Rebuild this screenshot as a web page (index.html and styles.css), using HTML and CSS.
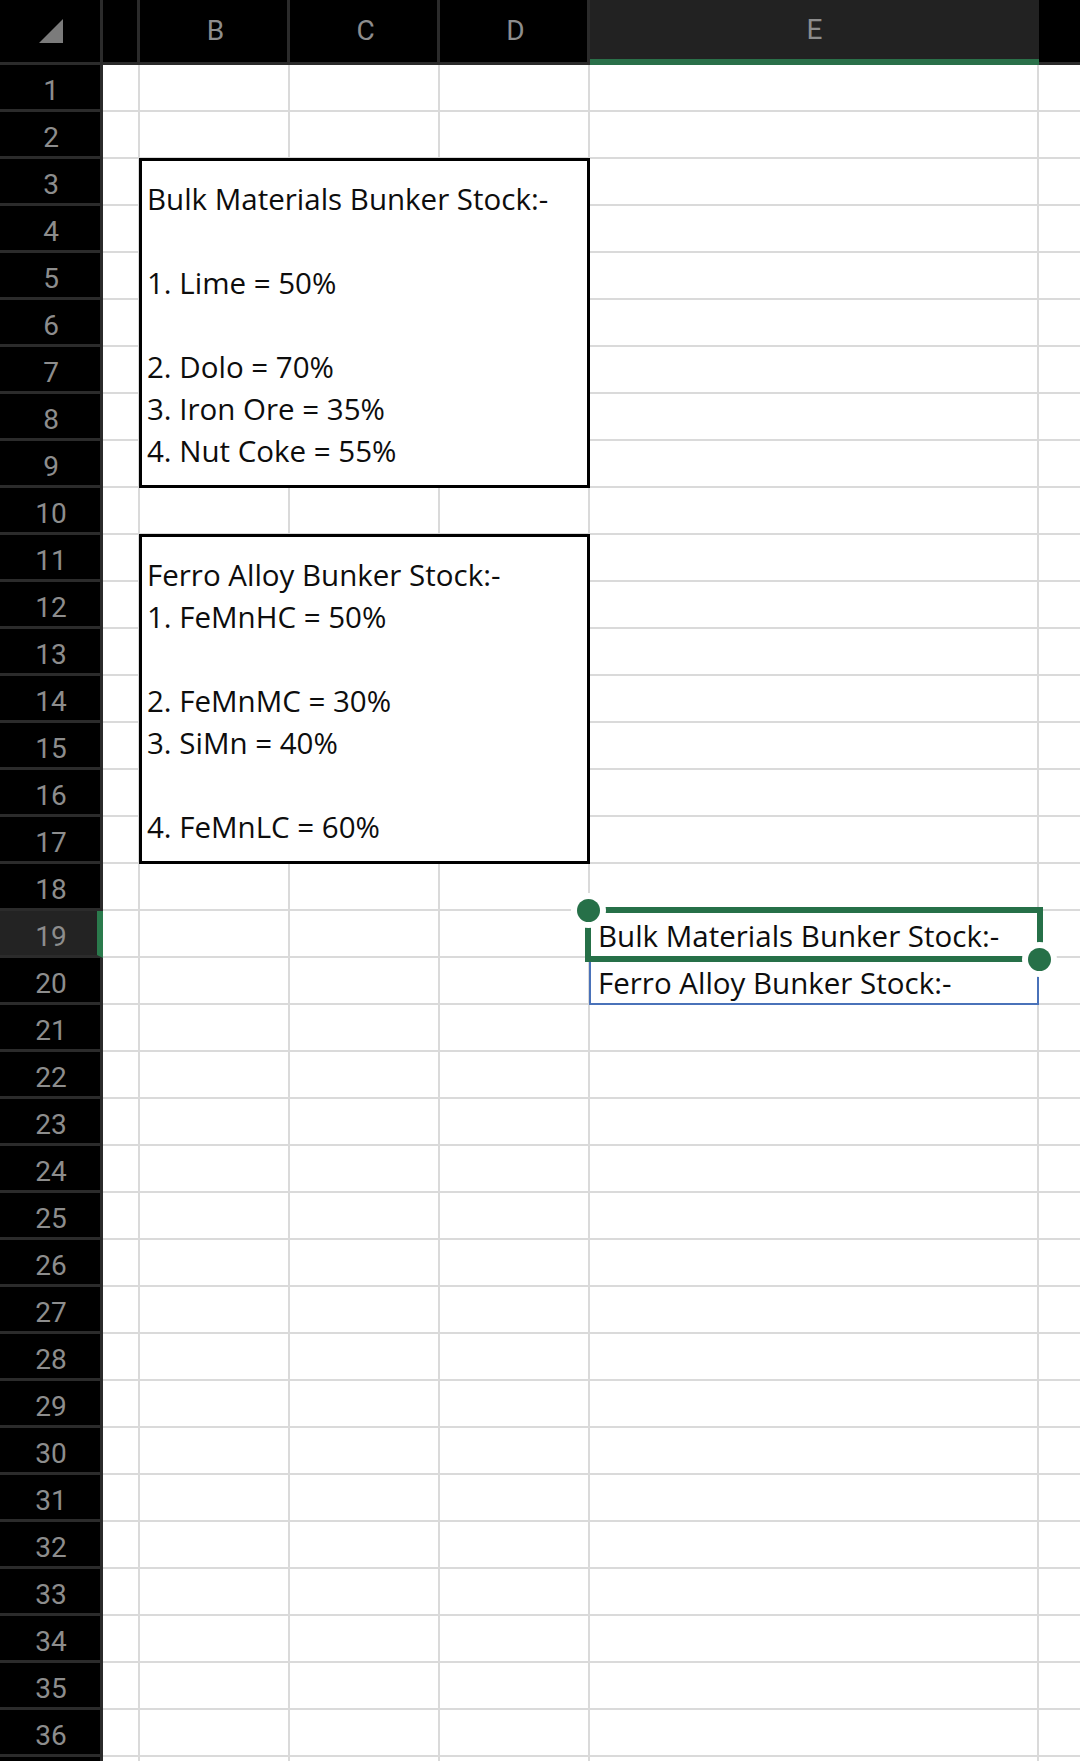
FILE: index.html
```html
<!DOCTYPE html>
<html lang="en">
<head>
<meta charset="utf-8">
<title>Bunker Stock</title>
<link rel="stylesheet" href="styles.css">
</head>
<body>
<div class="sheet">
  <div class="corner">
    <svg class="select-all" width="24" height="24" viewBox="0 0 24 24"><polygon points="24,0 24,24 0,24" fill="#7b7b7b"/></svg>
  </div>

  <div class="col-heads">
    <div class="col-head"></div>
    <div class="col-head">B</div>
    <div class="col-head">C</div>
    <div class="col-head">D</div>
    <div class="col-head is-active">E</div>
    <div class="col-head col-head--last"></div>
  </div>

  <div class="row-heads">
    <div class="row-head">1</div>
    <div class="row-head">2</div>
    <div class="row-head">3</div>
    <div class="row-head">4</div>
    <div class="row-head">5</div>
    <div class="row-head">6</div>
    <div class="row-head">7</div>
    <div class="row-head">8</div>
    <div class="row-head">9</div>
    <div class="row-head">10</div>
    <div class="row-head">11</div>
    <div class="row-head">12</div>
    <div class="row-head">13</div>
    <div class="row-head">14</div>
    <div class="row-head">15</div>
    <div class="row-head">16</div>
    <div class="row-head">17</div>
    <div class="row-head">18</div>
    <div class="row-head is-active">19</div>
    <div class="row-head">20</div>
    <div class="row-head">21</div>
    <div class="row-head">22</div>
    <div class="row-head">23</div>
    <div class="row-head">24</div>
    <div class="row-head">25</div>
    <div class="row-head">26</div>
    <div class="row-head">27</div>
    <div class="row-head">28</div>
    <div class="row-head">29</div>
    <div class="row-head">30</div>
    <div class="row-head">31</div>
    <div class="row-head">32</div>
    <div class="row-head">33</div>
    <div class="row-head">34</div>
    <div class="row-head">35</div>
    <div class="row-head">36</div>
    <div class="row-head"></div>
  </div>

  <div class="cells">
    <!-- column stripes carry the gridlines -->
    <div class="stripe col-a"></div>
    <div class="stripe col-b"></div>
    <div class="stripe col-c"></div>
    <div class="stripe col-d"></div>
    <div class="stripe col-e"></div>
    <div class="stripe col-f"></div>

    <!-- merged B3:D9 -->
    <div class="merged merged--bulk">Bulk Materials Bunker Stock:-<br><br>1. Lime = 50%<br><br>2. Dolo = 70%<br>3. Iron Ore = 35%<br>4. Nut Coke = 55%</div>

    <!-- merged B11:D17 -->
    <div class="merged merged--ferro">Ferro Alloy Bunker Stock:-<br>1. FeMnHC = 50%<br><br>2. FeMnMC = 30%<br>3. SiMn = 40%<br><br>4. FeMnLC = 60%</div>

    <div class="cell cell--e19">Bulk Materials Bunker Stock:-</div>
    <div class="cell cell--e20">Ferro Alloy Bunker Stock:-</div>

    <!-- active range E19 with fill preview down to E20 -->
    <div class="selection">
      <div class="selection__frame"></div>
      <div class="selection__handle selection__handle--start"></div>
      <div class="selection__handle selection__handle--end"></div>
    </div>
  </div>
</div>
</body>
</html>
```

FILE: styles.css
```css
* {
  box-sizing: border-box;
  margin: 0;
  padding: 0;
}

html, body {
  width: 1080px;
  height: 1761px;
  overflow: hidden;
  background: #ffffff;
}

body {
  font-family: "Open Sans", "Noto Sans", sans-serif;
  color: #0d0d0d;
}

.sheet {
  display: grid;
  grid-template-columns: 103px 977px;
  grid-template-rows: 65px 1696px;
  width: 1080px;
  height: 1761px;
  overflow: hidden;
}

/* ---------- headers ---------- */
.corner {
  background: #000;
  border-right: 3px solid #2b2b2b;
  border-bottom: 3px solid #2b2b2b;
  padding: 19px 0 0 39px;
}

.select-all {
  display: block;
}

.col-heads {
  display: grid;
  grid-template-columns: 37px 150px 150px 150px 449px 1fr;
  background: #000;
}

.col-head {
  display: flex;
  align-items: center;
  justify-content: center;
  border-right: 3px solid #2b2b2b;
  border-bottom: 3px solid #2b2b2b;
  color: #8d8d8d;
  font-family: Roboto, "Liberation Sans", sans-serif;
  font-size: 28px;
  font-weight: 400;
  padding: 0 0 2px 4px;
}

.col-head.is-active {
  background: #222222;
  border-right: 0;
  border-bottom: 6px solid #2a7049;
  padding: 0;
}

.col-head--last {
  border-right: 0;
}

.row-heads {
  display: flex;
  flex-direction: column;
  background: #000;
}

.row-head {
  flex: 0 0 47px;
  display: flex;
  align-items: center;
  justify-content: center;
  border-right: 3px solid #2b2b2b;
  border-bottom: 3px solid #2b2b2b;
  color: #8d8d8d;
  font-family: Roboto, "Liberation Sans", sans-serif;
  font-size: 28px;
  font-weight: 400;
  padding: 7px 0 0 2px;
}

.row-head.is-active {
  background: #232323;
  border-right: 6px solid #2a7a4c;
  padding-left: 5px;
}

/* ---------- cell area ---------- */
.cells {
  display: grid;
  grid-template-columns: 37px 150px 150px 150px 449px 41px;
  grid-template-rows: repeat(37, 47px);
  overflow: hidden;
}

.stripe {
  grid-row: 1 / -1;
  border-right: 2px solid #dadada;
  background: repeating-linear-gradient(180deg, transparent 0 45px, #dadada 45px 47px);
}

.col-a { grid-column: 1; }
.col-b { grid-column: 2; }
.col-c { grid-column: 3; }
.col-d { grid-column: 4; }
.col-e { grid-column: 5; }
.col-f { grid-column: 6; border-right: 0; }

.merged {
  grid-column: 2 / 5;
  margin: -1px 0 0 -1px;
  background: #fff;
  border: 3px solid #000;
  display: flex;
  flex-direction: column;
  justify-content: flex-end;
  padding: 0 6px 13px 5px;
  font-size: 29.5px;
  line-height: 42px;
  white-space: nowrap;
}

.merged--bulk { grid-row: 3 / 10; }
.merged--ferro { grid-row: 11 / 18; }

.cell {
  grid-column: 5;
  display: flex;
  align-items: center;
  padding: 3px 0 0 8px;
  font-size: 29.5px;
  line-height: 42px;
  white-space: nowrap;
}

.cell--e19 { grid-row: 19; }
.cell--e20 { grid-row: 20; }

/* ---------- selection ---------- */
.selection {
  grid-column: 5;
  grid-row: 19 / 21;
  position: relative;
  margin-left: -1px;
  border: 2px solid #4a72b9;
  border-top: 0;
}

.selection__frame {
  position: absolute;
  left: -6px;
  top: -4px;
  width: 458px;
  height: 55px;
  border: 6px solid #267048;
}

.selection__handle {
  position: absolute;
  width: 23px;
  height: 23px;
  border-radius: 50%;
  background: #267048;
  box-shadow: 0 0 0 6px #ffffff;
}

.selection__handle--start {
  left: -14px;
  top: -12px;
}

.selection__handle--end {
  left: 437px;
  top: 37px;
}
```
